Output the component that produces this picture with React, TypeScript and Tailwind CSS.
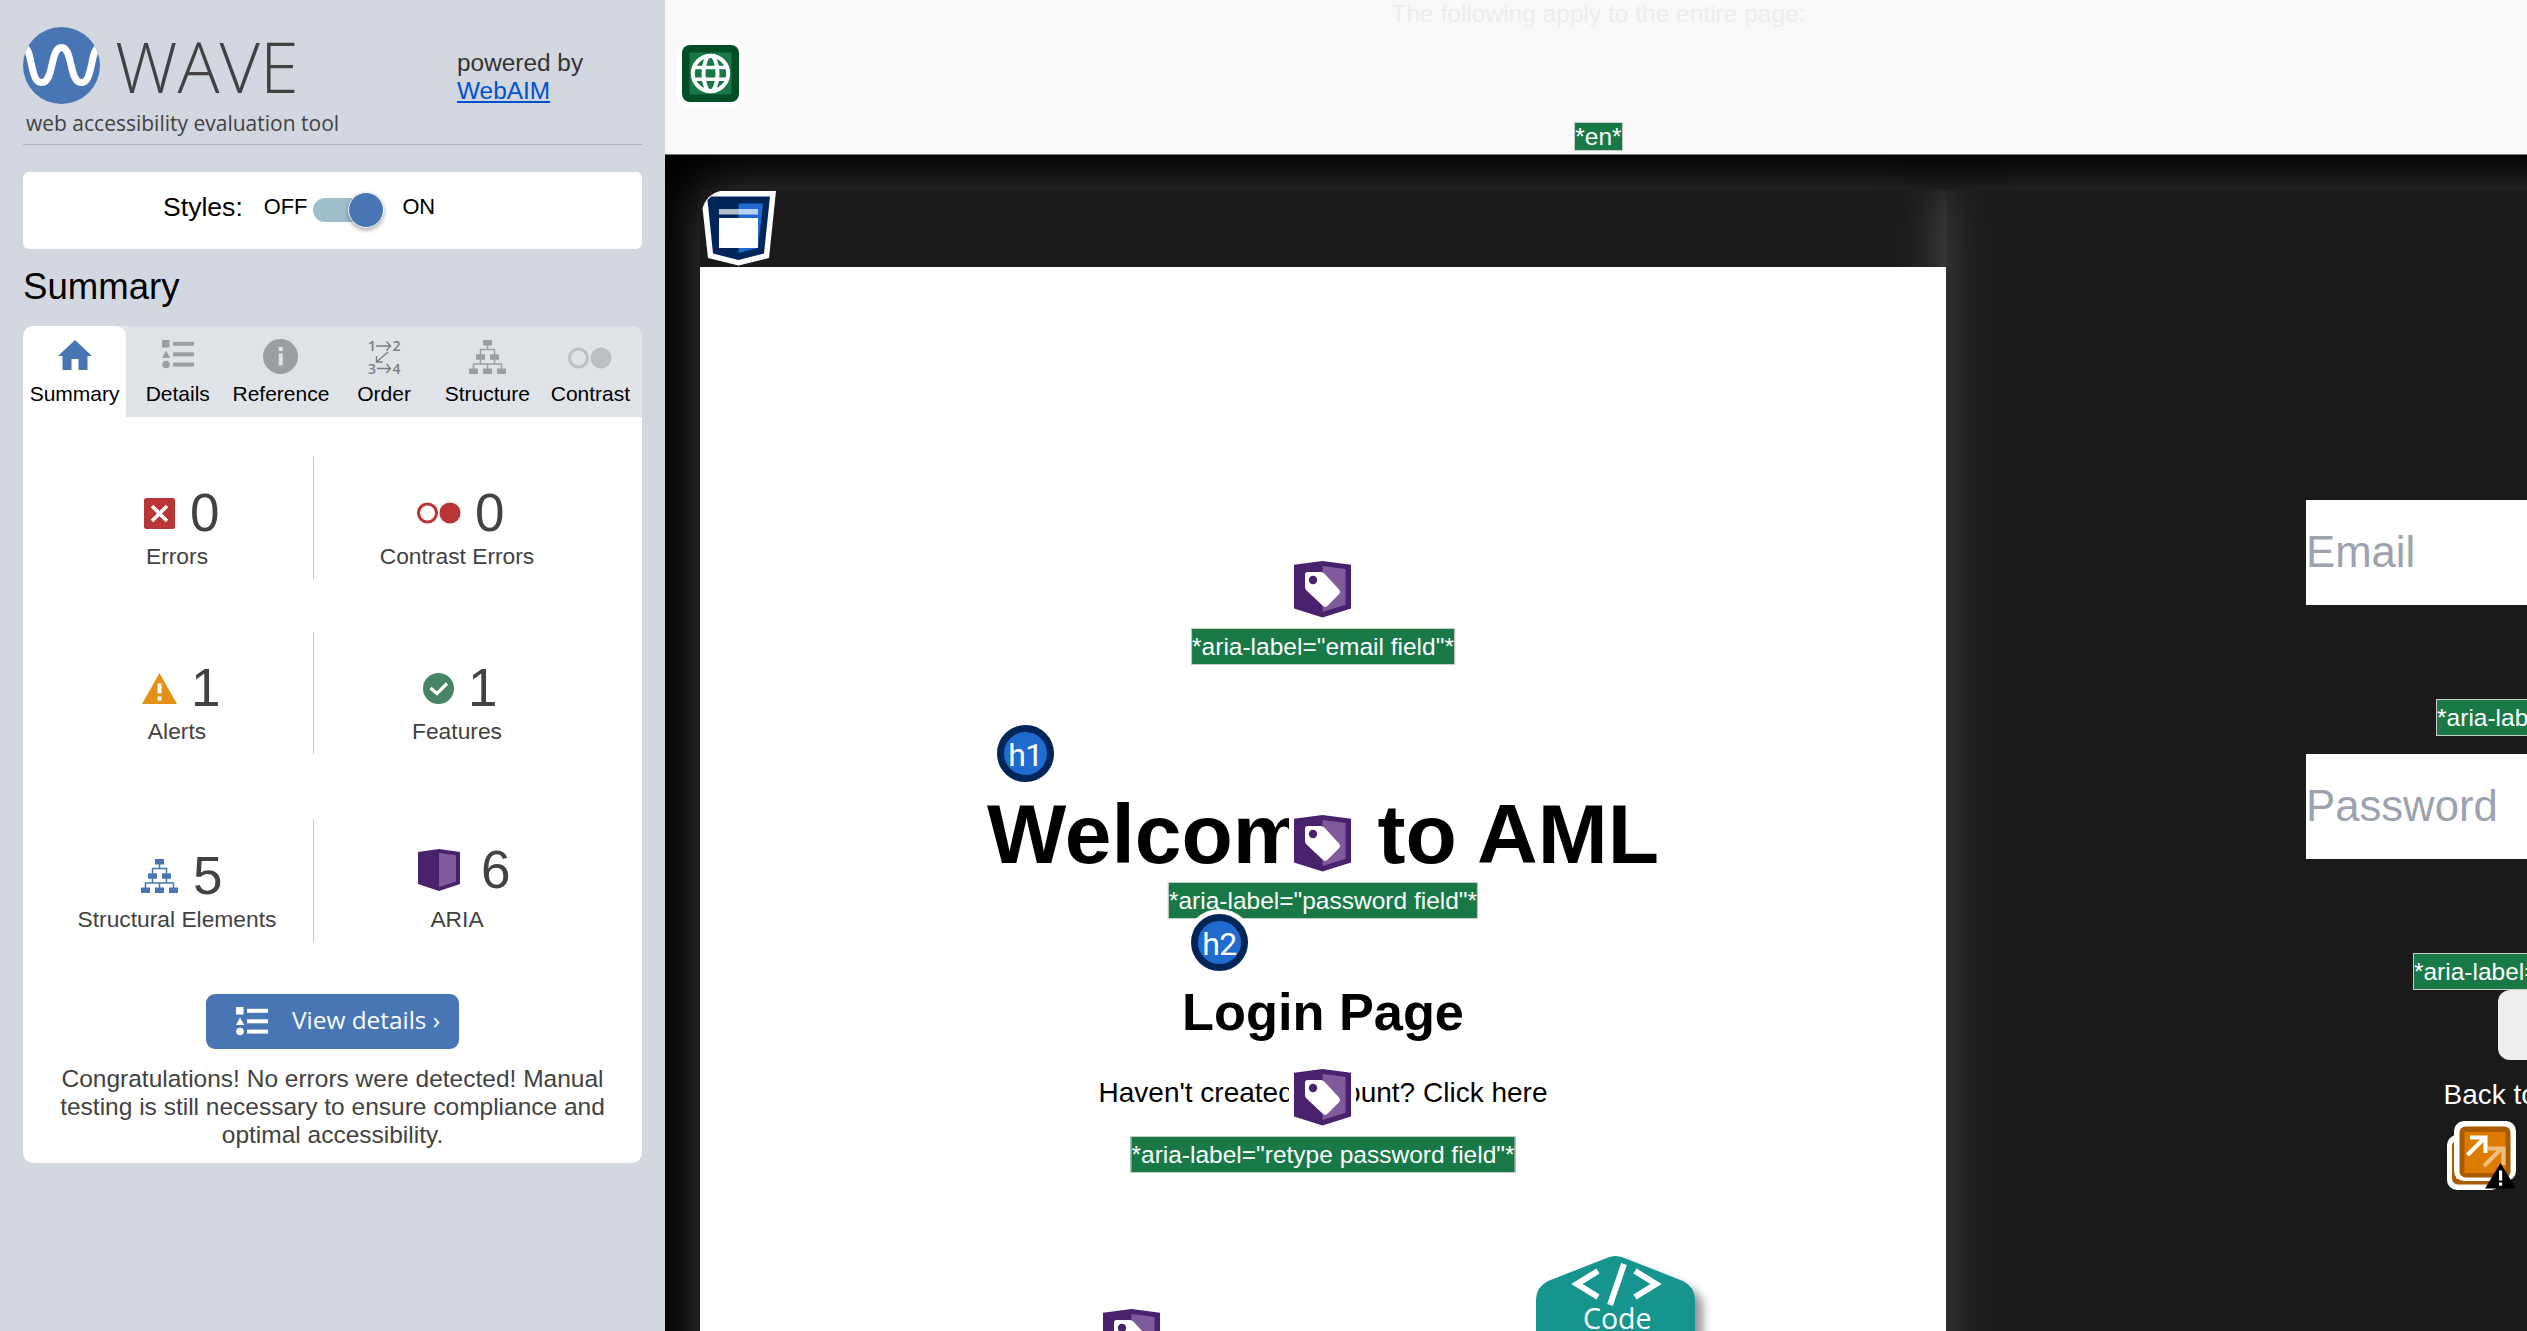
import React from "react";

type IconProps = { className?: string };

const LogoIcon = () => (
  <svg viewBox="0 0 77 77" className="size-[77px] shrink-0">
    <defs>
      <clipPath id="logo-disc">
        <circle cx="38.5" cy="38.5" r="38.5" />
      </clipPath>
    </defs>
    <circle cx="38.5" cy="38.5" r="38.5" fill="#4876b5" />
    <path
      clipPath="url(#logo-disc)"
      d="M-2 19C7 19 7 34 10 44C12 52 14 55.500 19 55.500C31 55.500 27 20.500 38.500 20.500C50 20.500 46 55.500 58 55.500C63 55.500 65 52 67 44C70 34 70 19 79 19"
      fill="none"
      stroke="#fff"
      strokeWidth="7"
    />
  </svg>
);

const HomeIcon = () => (
  <svg viewBox="0 0 34 30" className="-mt-[3px] h-[30px] w-[34px]">
    <path d="M17 0L34 16H29.500V30H20.500V19H13.500V30H4.500V16H0Z" fill="#4876b5" />
  </svg>
);

const ListIcon = ({ className }: IconProps) => (
  <svg viewBox="0 0 32 29" className={className} fill="currentColor">
    <rect x="0" y="0" width="7.500" height="7.500" />
    <path d="M4 10.500L8.200 18H0Z" />
    <circle cx="4" cy="24.500" r="3.800" />
    <rect x="11" y="1.800" width="21" height="4" />
    <rect x="11" y="12.300" width="21" height="4" />
    <rect x="11" y="22.600" width="21" height="4" />
  </svg>
);

const InfoIcon = () => (
  <svg viewBox="0 0 35 35" className="size-[35px]">
    <circle cx="17.500" cy="17.500" r="17.500" fill="#9b9fa2" />
    <rect x="15.700" y="8" width="4" height="4" fill="#e0e3e8" />
    <rect x="15.700" y="14.500" width="4" height="12" fill="#e0e3e8" />
  </svg>
);

const OrderIcon = () => (
  <svg viewBox="0 0 33 36" className="h-[36px] w-[33px] overflow-visible">
    <g fontFamily="'Open Sans', sans-serif" fontWeight="600" fontSize="14" fill="#7b7e80">
      <text x="0" y="12">1</text>
      <text x="24.500" y="12">2</text>
      <text x="0" y="34.500">3</text>
      <text x="24.500" y="34.500">4</text>
    </g>
    <g fill="none" stroke="#7b7e80" strokeWidth="1.400">
      <path d="M8 7H22.500M18.500 2.500L22.500 7L18.500 11.500M9 29.500H22.500M18.500 25L22.500 29.500L18.500 34" />
      <path d="M20 13L8.500 23M8.500 17V23H14.500" />
    </g>
  </svg>
);

const TreeIcon = ({ className }: IconProps) => (
  <svg viewBox="0 0 37 34" className={className}>
    <g fill="currentColor">
      <rect x="14" y="0" width="9" height="5.500" />
      <rect x="7" y="14.300" width="9" height="5.500" />
      <rect x="21" y="14.300" width="9" height="5.500" />
      <rect x="0" y="28.500" width="9" height="5.500" />
      <rect x="14" y="28.500" width="9" height="5.500" />
      <rect x="28" y="28.500" width="9" height="5.500" />
    </g>
    <path
      d="M18.500 5V9.500M11.500 15V9.500H25.500V15M11.500 19V24M25.500 19V24M4.500 29V24H32.500V29M18.500 24V29"
      fill="none"
      stroke="currentColor"
      strokeWidth="1.500"
    />
  </svg>
);

const ContrastIcon = ({ className }: IconProps) => (
  <svg viewBox="0 0 44 22" className={className}>
    <circle cx="10.500" cy="11" r="9" fill="none" stroke="currentColor" strokeWidth="3" />
    <circle cx="33" cy="11" r="10.500" fill="currentColor" />
  </svg>
);

const ErrorIcon = () => (
  <svg viewBox="0 0 31 31" className="size-[31px]">
    <rect width="31" height="31" rx="2.500" fill="#ba3536" />
    <path d="M8 8L23 23M23 8L8 23" stroke="#fff" strokeWidth="3.600" />
  </svg>
);

const AlertIcon = () => (
  <svg viewBox="0 0 35 31" className="h-[31px] w-[35px]">
    <path d="M17.500 0L35 31H0Z" fill="#e2901a" />
    <rect x="15.600" y="10.500" width="4" height="10" fill="#fff" />
    <rect x="15.600" y="23.500" width="4" height="4" fill="#fff" />
  </svg>
);

const CheckIcon = () => (
  <svg viewBox="0 0 31 31" className="size-[31px]">
    <circle cx="15.500" cy="15.500" r="15.500" fill="#468463" />
    <path d="M7.500 15L14 20.500L24 10.500" fill="none" stroke="#fff" strokeWidth="3.200" />
  </svg>
);

const AriaIcon = () => (
  <svg viewBox="0 0 42 42" className="size-[42px]">
    <path d="M21 0L42 3V35L21 42L0 35V3Z" fill="#49216d" />
    <path d="M21 4L38 6.300V32.500L21 38Z" fill="#7f5b9c" />
  </svg>
);

/* Purple shield holding a label tag, with a white outline around it. */
const TagIcon = ({ className }: IconProps) => (
  <svg viewBox="-5 -5 67 67" className={`absolute size-[67px] ${className}`}>
    <rect x="-5" y="-5" width="67" height="67" rx="3" fill="#fff" />
    <path d="M28.500 0L57 3.800V47.500L28.500 56.500L0 47.500V3.800Z" fill="#49216d" />
    <path d="M28.500 5L51.500 8V43.800L28.500 51Z" fill="#7f5b9c" />
    <path
      d="M13.500 11H26.500Q29 11 30.500 12.800L45 28.500Q47 31 45 33.200L33.500 44.800Q31 47 28.800 44.800L12.500 29.500Q11 28 11 25.500V14Q11 11 13.500 11Z"
      fill="#fff"
    />
    <circle cx="19" cy="19" r="4.200" fill="#49216d" />
  </svg>
);

const HeadingBadge = ({ label, className }: { label: string; className: string }) => (
  <div
    className={`absolute flex size-[67px] items-center justify-center rounded-full bg-white ${className}`}
  >
    <div className="flex size-[57px] items-center justify-center rounded-full border-[7px] border-[#002659] bg-[#1f6bcf] font-['Roboto'] text-[32px] leading-[40px] tracking-[-0.5px] text-white">
      <span className="pt-[2px] font-normal">{label}</span>
    </div>
  </div>
);

const GlobeIcon = () => (
  <svg viewBox="0 0 67 67" className="absolute top-[40px] left-[12px] size-[67px]">
    <rect width="67" height="67" rx="12" fill="#fff" />
    <rect x="5" y="5" width="57" height="57" rx="8" fill="#004d26" />
    <rect x="12.500" y="12.500" width="42" height="42" rx="1" fill="#187947" />
    <g fill="none" stroke="#fff" strokeWidth="4">
      <circle cx="33.500" cy="33.500" r="17.700" />
      <ellipse cx="33.500" cy="33.500" rx="7" ry="17.700" />
      <path d="M18 27.500H49M18 39.300H49" strokeWidth="3.400" />
    </g>
  </svg>
);

const HeaderIcon = () => (
  <svg viewBox="0 0 74 75" className="absolute top-[1px] left-[2px] h-[75px] w-[74px]">
    <path d="M18 0H74L67 67L36.500 74.500L6 67L0.500 17Q5 3 18 0Z" fill="#fff" />
    <path d="M5.500 9L9 5.500H68L62 62.500L36.500 69L11 62.500Z" fill="#002659" />
    <path d="M36.500 12.500H61L56 57L36.500 62Z" fill="#1f6bcf" />
    <rect x="17" y="18" width="39" height="5.500" fill="#fff" opacity="0.700" />
    <rect x="17" y="27" width="39" height="30" fill="#fff" />
  </svg>
);

const LinkAlertIcon = () => (
  <svg viewBox="0 0 69 69" className="h-[69px] w-[69px] shrink-0">
    <rect x="0" y="14" width="54" height="55" rx="10" fill="#fff" />
    <rect x="5" y="19" width="50" height="44.500" rx="6" fill="#a85b00" />
    <rect x="7" y="0" width="62" height="60" rx="10" fill="#fff" />
    <rect x="9.500" y="14" width="4" height="44" fill="#fff" />
    <rect x="12.500" y="5.500" width="51" height="51" rx="6" fill="#a85b00" />
    <rect x="17.500" y="11" width="41" height="41" rx="1" fill="#dd7b00" />
    <g fill="none" strokeWidth="4.200">
      <path d="M37 45L55 27M41 27.500H56.500V44" stroke="#f1bd7f" />
      <path d="M20.500 34L38 16.500M23 16.500H38.500V32" stroke="#fff" />
    </g>
    <path d="M53.500 42L69 67.500H38Z" fill="#000" />
    <rect x="52" y="49.500" width="3.200" height="10" fill="#fff" />
    <rect x="52" y="61.500" width="3.200" height="3.200" fill="#fff" />
  </svg>
);

const CodeTab = () => (
  <svg viewBox="0 0 200 100" className="absolute top-[1046px] left-[816px] h-[100px] w-[200px]">
    <defs>
      <filter id="tab-shadow" x="-20%" y="-20%" width="150%" height="150%">
        <feDropShadow dx="8" dy="8" stdDeviation="5" floodColor="#000" floodOpacity="0.400" />
      </filter>
    </defs>
    <path
      d="M20 120V64Q20 51 32 45L92 21.500Q99.500 18.500 107 21.500L167 45Q179 51 179 64V120Z"
      fill="#17958f"
      filter="url(#tab-shadow)"
    />
    <path d="M82 35L61 48L82 61M119 35L140 48L119 61M108 28L94 69" fill="none" stroke="#fff" strokeWidth="6" />
    <text x="67" y="93" fontFamily="'Open Sans', sans-serif" fontSize="28.500" fill="#fff">
      Code
    </text>
  </svg>
);

const Tab = ({ label, active, children }: { label: string; active?: boolean; children: React.ReactNode }) => (
  <div
    className={`flex flex-1 basis-0 flex-col items-center ${active ? "rounded-t-[10px] bg-white" : ""}`}
  >
    <div className="flex h-[61px] w-full items-center justify-center">{children}</div>
    <span className="-mt-[7px] text-[21px] leading-[28px] whitespace-nowrap text-black">{label}</span>
  </div>
);

type StatProps = {
  icon: React.ReactNode;
  count: number;
  label: string;
  iconSlot: string;
  countGap: string;
  top: string;
  labelGap: string;
};

const Stat = ({ icon, count, label, iconSlot, countGap, top, labelGap }: StatProps) => (
  <div className={top}>
    <div className="flex h-[54px] items-center">
      <div className={`flex w-[44px] shrink-0 items-center justify-center ${iconSlot}`}>{icon}</div>
      <span className={`text-[53px] leading-[54px] ${countGap}`}>{count}</span>
    </div>
    <div className={`pl-[1px] text-center text-[22.800px] leading-[28px] whitespace-nowrap ${labelGap}`}>{label}</div>
  </div>
);

const StatRow = ({ children, className }: { children: React.ReactNode; className: string }) => (
  <div
    className={`grid grid-cols-[274px_285px] pl-[17px] [&>*:first-child]:border-r [&>*:first-child]:border-[#c4c7c9] ${className}`}
  >
    {children}
  </div>
);

const AriaLabel = ({ text, className }: { text: string; className?: string }) => (
  <div
    className={`w-max border border-[#ccc] bg-[#187947] text-[24.500px] leading-[35px] whitespace-nowrap text-white ${className ?? ""}`}
  >
    {text}
  </div>
);

const Sidebar = () => (
  <aside className="h-full w-[665px] shrink-0 bg-[#d3d8e0] px-[23px] text-[#424242]">
    <header className="flex h-[145px] justify-between border-b border-[#aeb4b7] pt-[27px]">
      <div>
        <div className="flex h-[77px]">
          <LogoIcon />
          <span className="ml-[15px] pt-[4px] font-['Open_Sans'] text-[70px] leading-[70px] font-light">WAVE</span>
        </div>
        <div className="mt-[5px] ml-[3px] font-['Open_Sans'] text-[21px] leading-[28px]">
          web accessibility evaluation tool
        </div>
      </div>
      <div className="mt-[22px] w-[185px] text-[24.400px] leading-[28px] text-[#333]">
        powered by
        <br />
        <a className="text-[#0052cc] underline">WebAIM</a>
      </div>
    </header>

    <section className="mt-[27px] flex h-[77px] rounded-[6px] bg-white pt-[20px] pl-[140px] text-black">
      <span className="text-[26.600px] leading-[30px]">Styles:</span>
      <span className="ml-[21px] text-[21.800px] leading-[30px]">OFF</span>
      <div className="mt-[6px] ml-[6px] h-[24px] w-[62px] rounded-full bg-[#9fc0ca]">
        <div className="-mt-[6px] ml-[35px] size-[36px] rounded-full border border-white bg-[#4876b5] shadow-[0_2px_4px_rgba(0,0,0,0.350)]" />
      </div>
      <span className="ml-[27px] text-[21.800px] leading-[30px]">ON</span>
    </section>

    <h1 className="mt-[18px] text-[36.600px] leading-[40px] text-black">Summary</h1>

    <section className="mt-[19px] h-[837px] overflow-hidden rounded-[10px] bg-white">
      <nav className="flex h-[91px] bg-[#e0e3e8]">
        <Tab label="Summary" active>
          <HomeIcon />
        </Tab>
        <Tab label="Details">
          <ListIcon className="-mt-[4px] h-[29px] w-[32px] text-[#9b9fa2]" />
        </Tab>
        <Tab label="Reference">
          <InfoIcon />
        </Tab>
        <Tab label="Order">
          <OrderIcon />
        </Tab>
        <Tab label="Structure">
          <TreeIcon className="h-[34px] w-[37px] text-[#9b9fa2]" />
        </Tab>
        <Tab label="Contrast">
          <ContrastIcon className="mt-[2px] h-[22px] w-[44px] text-[#bcc0c5]" />
        </Tab>
      </nav>

      <StatRow className="mt-[40px] h-[122px]">
        <Stat icon={<ErrorIcon />} count={0} label="Errors" iconSlot="ml-[97px]" countGap="ml-[9px]" top="pt-[29px]" labelGap="mt-[2px]" />
        <Stat icon={<ContrastIcon className="h-[22px] w-[44px] text-[#ba3536]" />} count={0} label="Contrast Errors" iconSlot="ml-[103px]" countGap="ml-[14px]" top="pt-[29px]" labelGap="mt-[2px]" />
      </StatRow>
      <StatRow className="mt-[53px] h-[122px]">
        <Stat icon={<AlertIcon />} count={1} label="Alerts" iconSlot="ml-[97px]" countGap="ml-[10px]" top="pt-[29px]" labelGap="mt-[2px]" />
        <Stat icon={<CheckIcon />} count={1} label="Features" iconSlot="ml-[102px]" countGap="ml-[8px]" top="pt-[29px]" labelGap="mt-[2px]" />
      </StatRow>
      <StatRow className="mt-[65px] h-[123px]">
        <Stat icon={<TreeIcon className="h-[34px] w-[37px] text-[#4876b5]" />} count={5} label="Structural Elements" iconSlot="ml-[97px]" countGap="ml-[12px]" top="pt-[30px]" labelGap="mt-[2px]" />
        <Stat icon={<AriaIcon />} count={6} label="ARIA" iconSlot="ml-[103px]" countGap="ml-[20px]" top="pt-[24px]" labelGap="mt-[8px]" />
      </StatRow>

      <button className="mt-[52px] ml-[183px] flex h-[55px] w-[253px] items-center rounded-[9px] bg-[#4876b5] pl-[30px] font-['Open_Sans'] text-[24.400px] text-white">
        <ListIcon className="h-[29px] w-[32px]" />
        <span className="-mt-[3px] ml-[24px] leading-[34px]">View details ›</span>
      </button>
      <p className="mx-auto mt-[16px] w-[560px] text-center text-[24.500px] leading-[28px]">
        Congratulations! No errors were detected! Manual testing is still necessary to ensure compliance and optimal
        accessibility.
      </p>
    </section>
  </aside>
);

const PageBar = () => (
  <div className="relative z-20 flex h-[155px] w-full flex-col items-center border-b border-[#6f8070] bg-[#f9f9f9] pl-[5px]">
    <span className="text-[24.500px] leading-[28px] text-[#ededed]">The following apply to the entire page:</span>
    <div className="mt-[94px] w-max border border-[#ccc] bg-[#187947] text-[24.500px] leading-[27px] text-white">*en*</div>
    <GlobeIcon />
  </div>
);

const LoginPanel = () => (
  <section className="relative h-[1300px] w-[1246px] shrink-0 bg-[#1a1a1a] pt-[77px] shadow-[0_0_50px_#444]">
    <HeaderIcon />
    <div className="flex h-full flex-col items-center bg-white text-black">
      <h1 className="mt-[525px] text-[84px] leading-[84px] font-bold">Welcome to AML</h1>
      <h2 className="mt-[110px] text-[52.300px] leading-[52px] font-bold">Login Page</h2>
      <p className="mt-[41px] text-[28px] leading-[28px]">Haven't created account? Click here</p>
    </div>
    <TagIcon className="top-[366px] left-[589px]" />
    <TagIcon className="top-[620px] left-[589px]" />
    <TagIcon className="top-[874px] left-[589px]" />
    <TagIcon className="top-[1114px] left-[398px]" />
    <AriaLabel text={'*aria-label="email field"*'} className="absolute top-[438px] left-1/2 -translate-x-1/2" />
    <AriaLabel text={'*aria-label="password field"*'} className="absolute top-[692px] left-1/2 -translate-x-1/2" />
    <AriaLabel text={'*aria-label="retype password field"*'} className="absolute top-[946px] left-1/2 -translate-x-1/2" />
    <HeadingBadge label="h1" className="top-[530px] left-[292px]" />
    <HeadingBadge label="h2" className="top-[719px] left-[486px]" />
    <CodeTab />
  </section>
);

const Field = ({ placeholder }: { placeholder: string }) => (
  <div className="h-[105px] w-[526px] shrink-0 bg-white pt-[26px] text-[43.700px] leading-[52px] text-[#9ca3af]">{placeholder}</div>
);

const SignInPanel = () => (
  <section className="flex h-[1300px] w-[1246px] shrink-0 flex-col items-center bg-[#1a1a1a] pt-[310px] text-white">
    <Field placeholder="Email" />
    <AriaLabel text={'*aria-label="email field"*'} className="mt-[94px] mr-[2px]" />
    <div className="mt-[18px]">
      <Field placeholder="Password" />
    </div>
    <AriaLabel text={'*aria-label="password field"*'} className="mt-[94px] mr-[2px]" />
    <div className="h-[70px] w-[142px] shrink-0 rounded-[12px] bg-[#eee]" />
    <div className="mt-[21px] w-[251px] text-[28px] leading-[28px]">Back to Home page</div>
    <div className="mt-[12px] w-[244px]">
      <LinkAlertIcon />
    </div>
  </section>
);

export default function App() {
  return (
    <div className="flex h-[1331px] w-[2527px] overflow-hidden bg-black font-['Liberation_Sans',sans-serif]">
      <Sidebar />
      <main className="relative min-w-0 flex-1 overflow-hidden bg-black">
        <PageBar />
        <div className="relative ml-[35px] flex h-[1335px] pt-[35px]">
          <div className="relative z-10">
            <LoginPanel />
            <div className="absolute top-0 right-0 h-[77px] w-[80px] overflow-hidden">
              <div className="ml-[80px] h-[1300px] w-[1246px] shadow-[0_0_50px_#555]" />
            </div>
          </div>
          <div className="shadow-[0_0_50px_#444]">
            <SignInPanel />
          </div>
        </div>
      </main>
    </div>
  );
}
